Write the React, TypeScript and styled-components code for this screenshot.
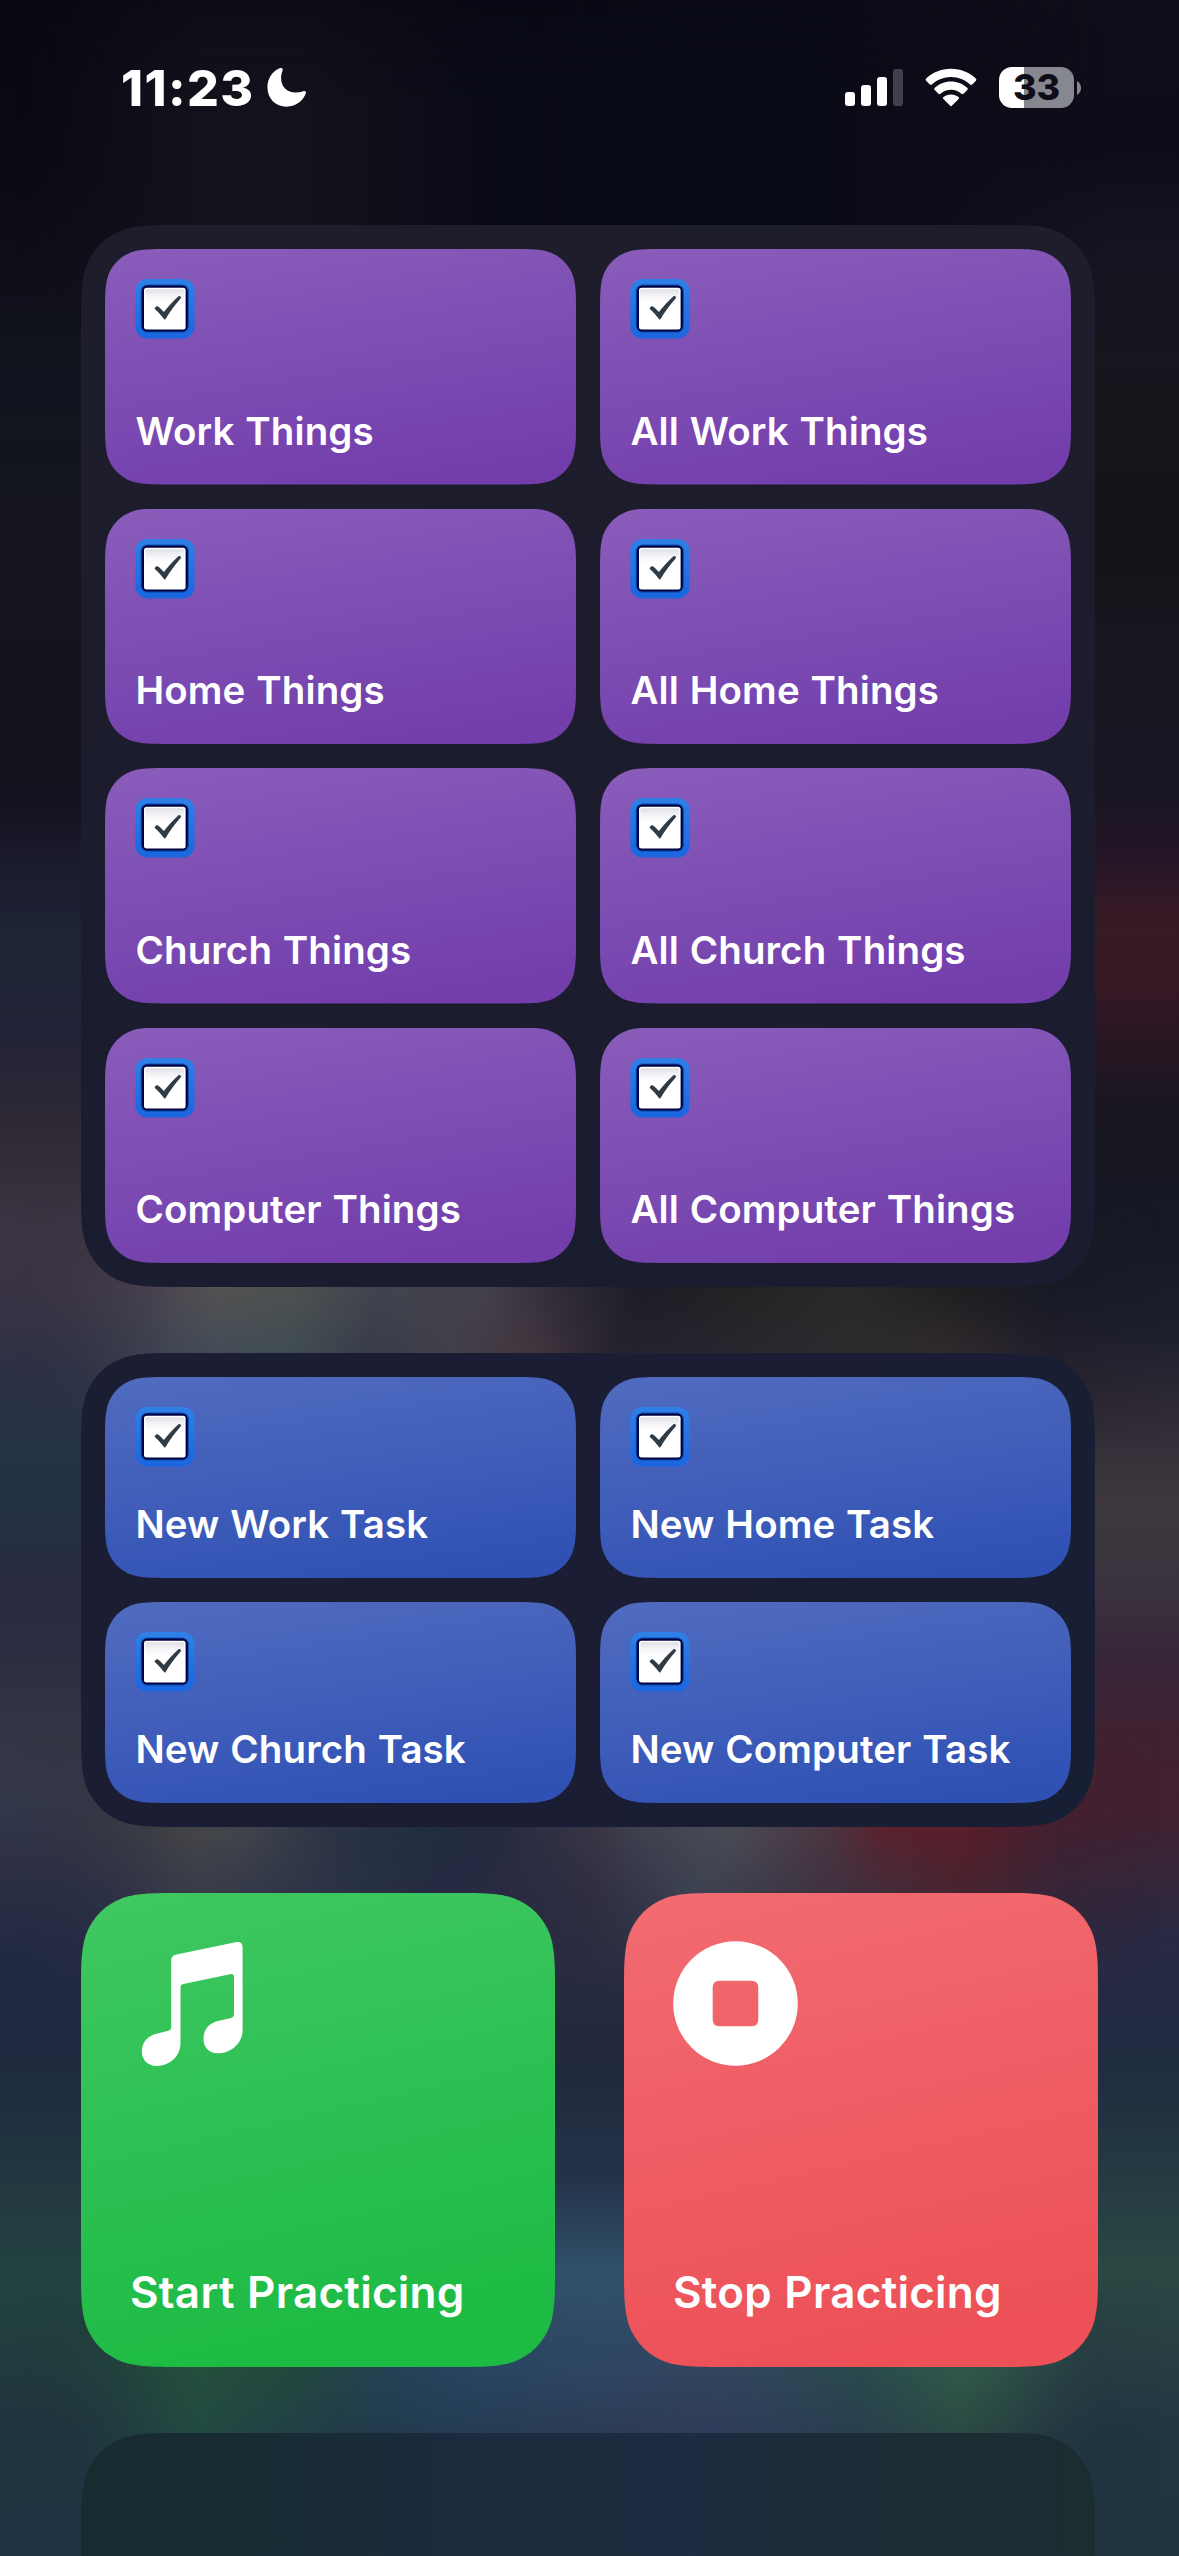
import React from "react";
import styled, { createGlobalStyle } from "styled-components";

const GlobalStyle = createGlobalStyle`
  html, body { margin: 0; padding: 0; background: #080812; }
  body { overflow: hidden; }
  * { box-sizing: border-box; }
`;

/* Continuous-curvature rounded rectangle, as a CSS path() value. */
const smoothRect = (w: number, h: number, r: number) => {
  const a = 1.52866 * r;
  const b = 1.08849 * r;
  const c = 0.86841 * r;
  const d = 0.63149 * r;
  const e = 0.37282 * r;
  const f = 0.16906 * r;
  const g = 0.07491 * r;
  return `path("M${a} 0L${w - a} 0C${w - b} 0 ${w - c} 0 ${w - d} ${g}C${w - e} ${f} ${w - f} ${e} ${w - g} ${d}C${w} ${c} ${w} ${b} ${w} ${a}L${w} ${h - a}C${w} ${h - b} ${w} ${h - c} ${w - g} ${h - d}C${w - f} ${h - e} ${w - e} ${h - f} ${w - d} ${h - g}C${w - c} ${h} ${w - b} ${h} ${w - a} ${h}L${a} ${h}C${b} ${h} ${c} ${h} ${d} ${h - g}C${e} ${h - f} ${f} ${h - e} ${g} ${h - d}C0 ${h - c} 0 ${h - b} 0 ${h - a}L0 ${a}C0 ${b} 0 ${c} ${g} ${d}C${f} ${e} ${e} ${f} ${d} ${g}C${c} 0 ${b} 0 ${a} 0Z")`;
};

const Screen = styled.div`
  position: relative;
  width: 1179px;
  height: 2556px;
  overflow: hidden;
  font-family: Inter, "Liberation Sans", sans-serif;
  color: #fff;
`;

const Wallpaper = styled.div`
  position: absolute;
  inset: 0;
  background: linear-gradient(
    180deg,
    #080812 0, #0a0914 160px, #0e0e19 260px, #11141e 390px, #15151d 560px, #13121b 740px,
    #14121f 800px, #1c1d31 880px, #1f2537 950px, #232338 1040px, #2e2834 1120px, #3b3442 1230px,
    #383344 1300px, #2d3045 1370px, #253444 1450px, #233243 1500px, #282b42 1580px, #2c2f42 1660px,
    #323644 1740px, #33374a 1800px, #2d3045 1870px, #222a42 1950px, #1f293f 2050px, #1f3040 2120px,
    #223a40 2200px, #224240 2280px, #213c3e 2350px, #20343f 2430px, #203444 2556px
  );

  &::after {
    content: "";
    position: absolute;
    inset: 0;
    background: linear-gradient(
      180deg,
      #0e0d19 0, #0e0c18 150px, #141320 240px, #17161e 360px, #131418 500px, #141317 560px,
      #161720 640px, #171522 780px, #231527 850px, #351a26 910px, #371925 980px, #2b1723 1030px,
      #1a1620 1100px, #161722 1180px, #171b28 1260px, #1d1f2d 1330px, #2b2733 1390px, #3d373d 1500px,
      #3a333e 1590px, #372538 1660px, #3f2232 1730px, #43202f 1800px, #362638 1870px, #292944 1940px,
      #222b42 2030px, #20303f 2100px, #243a42 2170px, #2b4743 2270px, #283f42 2350px, #213642 2430px,
      #203341 2556px
    );
    mask-image: linear-gradient(90deg, transparent 45%, #000 80%);
  }
`;

/* A horizontal slice of the blurred wallpaper that blends from one row of hues into another. */
const Slice = styled.div<{ $top: number; $height: number; $from: string; $to: string; $fade?: "top" | "bottom" }>`
  position: absolute;
  left: 0;
  width: 1179px;
  top: ${(p) => p.$top}px;
  height: ${(p) => p.$height}px;
  background: linear-gradient(90deg, ${(p) => p.$from});
  mask-image: linear-gradient(90deg, transparent 20px, #000 170px, #000 1010px, transparent 1160px),
    ${(p) =>
      p.$fade === "top"
        ? "linear-gradient(180deg, transparent, #000)"
        : p.$fade === "bottom"
          ? "linear-gradient(0deg, transparent, #000)"
          : "linear-gradient(#000, #000)"};
  mask-composite: intersect;

  &::after {
    content: "";
    position: absolute;
    inset: 0;
    background: linear-gradient(90deg, ${(p) => p.$to});
    mask-image: linear-gradient(180deg, transparent, #000);
  }
`;

const TopGlow = styled.div`
  position: absolute;
  inset: 0 0 auto 0;
  height: 300px;
  background: linear-gradient(90deg, transparent 20px, #12121c 200px, #12121c 300px, #0a0b17 480px, #080a16 780px, #0c0c18 900px, transparent 1100px);
  mask-image: linear-gradient(180deg, rgba(0, 0, 0, 0.5), #000 100px, #000);
`;

const CenterColumn = styled.div`
  position: absolute;
  left: 380px;
  width: 420px;
  top: 1880px;
  height: 500px;
  background: linear-gradient(180deg, #2c2d44 0, #272b3f 100px, #20293b 190px, #24334a 300px, #2f5169 390px, #31506a 420px, #2d4964 500px);
  mask-image: linear-gradient(90deg, transparent, #000 150px, #000 270px, transparent);
`;

const Content = styled.div`
  position: relative;
  display: flex;
  flex-direction: column;
  height: 100%;
`;

const StatusBar = styled.header`
  display: flex;
  flex: none;
  justify-content: space-between;
  height: 225px;
  padding: 67px 98px 0 121px;
`;

const StatusGroup = styled.div<{ $gap: number }>`
  display: flex;
  align-items: flex-start;
  height: 42px;
  gap: ${(p) => p.$gap}px;
`;

const Clock = styled.time`
  width: 133px;
  font-size: 50px;
  font-weight: 800;
  line-height: 42px;
  letter-spacing: 1.4px;
  white-space: nowrap;
`;

const Glyph = styled.svg`
  display: block;
  flex: none;
`;

const Battery = styled.div`
  display: flex;
  align-items: center;
  gap: 3px;
`;

const BatteryBody = styled.div`
  display: flex;
  align-items: center;
  justify-content: center;
  width: 75px;
  height: 41px;
  border-radius: 13px;
  background: linear-gradient(90deg, #fff 33.3%, #87878f 33.3%);
  color: #0e0d19;
  font-size: 36px;
  font-weight: 800;
  letter-spacing: -0.2px;
  line-height: 41px;
`;

const Stack = styled.main`
  display: flex;
  flex-direction: column;
  gap: 66px;
  padding: 0 81px;
`;

const Panel = styled.section<{ $height: number; $fill: string }>`
  display: grid;
  grid-template-columns: 471px 471px;
  grid-auto-rows: 1fr;
  flex: none;
  gap: 24px;
  width: 1014px;
  height: ${(p) => p.$height}px;
  padding: 24px;
  background: ${(p) => p.$fill};
  clip-path: ${(p) => smoothRect(1014, p.$height, 66)};
`;

const Tile = styled.button<{ $height: number; $fill: string }>`
  display: flex;
  flex-direction: column;
  align-items: flex-start;
  justify-content: space-between;
  height: ${(p) => p.$height}px;
  padding: 30px 30px 31px 30px;
  border: 0;
  background: ${(p) => p.$fill};
  clip-path: ${(p) => smoothRect(471, p.$height, 42)};
  color: #fff;
  font-family: inherit;
`;

const TileLabel = styled.span`
  padding-left: 0.5px;
  font-size: 38.5px;
  font-weight: 600;
  line-height: 46px;
  letter-spacing: 0.1px;
  word-spacing: 1px;
  white-space: nowrap;
`;

const BigRow = styled.section`
  display: flex;
  gap: 69px;
`;

const BigTile = styled.button<{ $fill: string }>`
  display: flex;
  flex: none;
  flex-direction: column;
  align-items: flex-start;
  justify-content: space-between;
  width: 474px;
  height: 474px;
  padding: 48px 48px 48px 49px;
  border: 0;
  background: ${(p) => p.$fill};
  clip-path: ${smoothRect(474, 474, 66)};
  color: #fff;
  font-family: inherit;
`;

const BigLabel = styled.span`
  font-size: 44px;
  font-weight: 600;
  line-height: 54px;
  letter-spacing: 0.25px;
  word-spacing: 1px;
  white-space: nowrap;
`;

const PURPLE = "linear-gradient(171deg, #895cba 3%, #7c4cb2 50%, #733eac 90%)";
const BLUE = "linear-gradient(172deg, #4f6bbf 3%, #405db9 50%, #2f51b4 92%)";
const GREEN = "linear-gradient(167deg, #3fc760 3%, #2bc052 50%, #1dbb43 88%)";
const RED = "linear-gradient(167deg, #f16b71 3%, #ee5c62 50%, #ed5057 90%)";

const Moon = () => (
  <Glyph width="40" height="40" viewBox="0 0 40 40">
    <path
      d="M13.2 1.1C14.8.4 16.3 1.6 15.6 3.4C14.5 6 14.1 8.2 14.1 11C14.1 19.9 19.9 25.4 28.7 25.4C31.5 25.4 34 25 36.3 24.2C38.3 23.5 39.5 24.8 38.8 26.6C35.7 34.6 28.2 39.7 19.6 39.7C8.5 39.7.4 31.3.4 20.2C.4 11.700 5.500 4 13.200 1.100Z"
      fill="#fff"
    />
  </Glyph>
);

const Signal = () => (
  <Glyph width="58" height="41" viewBox="0 0 58 41">
    <rect x="0" y="25" width="10" height="14" rx="3" fill="#fff" />
    <rect x="16" y="18" width="10" height="21" rx="3" fill="#fff" />
    <rect x="32" y="10" width="10" height="29" rx="3" fill="#fff" />
    <rect x="48" y="2" width="10" height="37" rx="3" fill="#403f4c" />
  </Glyph>
);

const Wifi = () => (
  <Glyph width="52" height="41" viewBox="0 0 52 41" fill="#fff">
    <path d="M26 1.800C35.800 1.800 44.700 5.600 50.800 11.500C51.500 12.200 51.500 13.100 50.900 13.700L47.200 17.400C46.600 18 45.700 18 45 17.400C40 12.800 33.300 10 26 10C18.700 10 12 12.800 7 17.400C6.300 18 5.400 18 4.800 17.400L1.100 13.700C.5 13.100.5 12.200 1.200 11.500C7.300 5.600 16.200 1.800 26 1.800Z" />
    <path d="M26 14.500C32.300 14.500 38 16.900 42.200 20.800C42.900 21.500 42.900 22.300 42.300 22.900L38.500 26.700C37.900 27.300 37.100 27.300 36.400 26.700C33.600 24.200 30 22.700 26 22.700C22 22.700 18.400 24.200 15.600 26.700C14.900 27.300 14.100 27.300 13.500 26.700L9.700 22.900C9.100 22.300 9.100 21.500 9.800 20.800C14 16.900 19.700 14.500 26 14.500Z" />
    <path d="M26 27.400C28.900 27.400 31.500 28.400 33.500 30.100C34.200 30.700 34.200 31.500 33.600 32.100L27.100 38.600C26.400 39.300 25.600 39.300 24.900 38.600L18.400 32.100C17.800 31.500 17.800 30.700 18.500 30.100C20.500 28.400 23.100 27.400 26 27.400Z" />
  </Glyph>
);

const CheckIcon = () => (
  <Glyph width="60" height="60" viewBox="0 0 60 60">
    <defs>
      <linearGradient id="check-frame" x1="0" y1="0" x2="0" y2="1">
        <stop offset="0" stopColor="#2f80e6" />
        <stop offset="1" stopColor="#1a66df" />
      </linearGradient>
      <linearGradient id="check-paper" x1="0" y1="0" x2="0" y2="1">
        <stop offset="0" stopColor="#dedee6" />
        <stop offset=".15" stopColor="#f2f2f6" />
        <stop offset=".35" stopColor="#fff" />
      </linearGradient>
    </defs>
    <rect x=".3" y="0" width="59.400" height="59.600" rx="12" fill="url(#check-frame)" />
    <rect x="5.600" y="5.400" width="48.400" height="48.400" rx="7" fill="#0a4fb4" />
    <rect x="6.800" y="6.600" width="46" height="46" rx="5.500" fill="#000342" />
    <rect x="9" y="8.800" width="41.600" height="41.800" rx="2.500" fill="#fff" />
    <rect x="10.200" y="10.200" width="39" height="38.400" rx="1.500" fill="url(#check-paper)" />
    <path
      transform="translate(.6 0)"
      d="M19.200 30.100C18.700 29 20.500 26.700 22 27.300C24.500 29 26.400 30.900 28.300 33.100C32.200 27.800 37 22.400 42.900 17.200C44.200 16.400 46.100 18 45.200 19.300C39.400 25.800 34.600 32.600 29.800 40.200C29.500 40.700 29 40.600 28.600 40.200C25.800 36.500 22.500 33.100 19.200 30.100Z"
      fill="#2f3b45"
    />
  </Glyph>
);

const MusicIcon = () => (
  <Glyph width="125" height="125" viewBox="0 0 125 125">
    <path
      d="M41.200 19.500C41.200 16 43 14.200 46.500 13.500L105.500 1.200C110 .3 112.600 1.900 112.600 6.300V89C112.600 102.500 101 112.300 87.600 112.300C79.200 112.300 73.500 106.500 73.500 98C73.500 89 78.500 82.500 88 80.100L100.200 77.200C103 76.500 104 75.300 104 73V36.500C104 33.800 102.800 32.700 100.200 33.200L53.300 42.900C51.200 43.400 50.500 44.300 50.500 46.500V102C50.500 115.500 39.500 124.900 26.500 124.900C17.700 124.900 11.900 119 11.900 110.500C11.900 101.500 17.200 95 26.500 92.700L37.300 90.100C40.200 89.400 41.200 88.400 41.200 86Z"
      fill="#fff"
    />
  </Glyph>
);

const StopIcon = () => (
  <Glyph width="125" height="125" viewBox="0 0 125 125">
    <path
      fillRule="evenodd"
      fill="#fff"
      d="M62.500.2A62.300 62.300 0 1 1 62.500 124.800A62.300 62.300 0 1 1 62.500.2ZM46.700 39.700Q39.700 39.700 39.700 46.700V78.300Q39.700 85.300 46.700 85.300H78.300Q85.300 85.300 85.300 78.300V46.700Q85.300 39.700 78.300 39.700Z"
    />
  </Glyph>
);

const THINGS = [
  "Work Things", "All Work Things",
  "Home Things", "All Home Things",
  "Church Things", "All Church Things",
  "Computer Things", "All Computer Things",
];
const TASKS = ["New Work Task", "New Home Task", "New Church Task", "New Computer Task"];

const ROW_1287 =
  "#3b3442 0, #4a4350 150px, #545252 215px, #4e5150 290px, #41444f 380px, #45424b 480px, #302c38 560px, #1d1d27 640px, #222422 740px, #29292b 850px, #1f1e20 960px, #181a24 1050px";
const ROW_1353 =
  "#2e3046 0, #3a3e4c 100px, #434c57 215px, #404d52 290px, #383d49 370px, #42404a 450px, #43353f 530px, #24222e 620px, #25252f 700px, #2b2c2e 830px, #302b2d 940px, #221f2a 1050px";
const ROW_1827 =
  "#31343f 0, #36383f 80px, #454548 200px, #42464c 240px, #2c3445 330px, #212f40 420px, #262b42 500px, #3a3646 600px, #3f4250 640px, #4a4b55 730px, #4b3540 830px, #5a222f 880px, #5a1e2b 960px, #45202f 1060px";
const ROW_1893 =
  "#2d3045 60px, #3a3c4a 200px, #2b3346 330px, #252a42 450px, #302e42 590px, #3d4351 700px, #3f3342 820px, #48242f 960px, #382536 1060px";
const ROW_2367 =
  "#223f3c 60px, #254f3d 200px, #23473d 300px, #244258 400px, #294660 470px, #2f4763 600px, #33455f 700px, #30485a 770px, #2a4a4d 860px, #30594a 960px, #2c4a46 1040px, #253b42 1100px";
const ROW_2433 =
  "#20373f 60px, #224a41 200px, #213b49 350px, #233c54 450px, #2c3b55 600px, #303c5a 720px, #283f4f 850px, #2b4a42 960px, #22333f 1100px";

export default function App() {
  return (
    <Screen>
      <GlobalStyle />
      <Wallpaper />
      <TopGlow />
      <CenterColumn />
      <Slice $top={1200} $height={87} $from={ROW_1287} $to={ROW_1287} $fade="top" />
      <Slice $top={1287} $height={66} $from={ROW_1287} $to={ROW_1353} />
      <Slice $top={1353} $height={90} $from={ROW_1353} $to={ROW_1353} $fade="bottom" />
      <Slice $top={1730} $height={97} $from={ROW_1827} $to={ROW_1827} $fade="top" />
      <Slice $top={1827} $height={66} $from={ROW_1827} $to={ROW_1893} />
      <Slice $top={1893} $height={110} $from={ROW_1893} $to={ROW_1893} $fade="bottom" />
      <Slice $top={2280} $height={87} $from={ROW_2367} $to={ROW_2367} $fade="top" />
      <Slice $top={2367} $height={66} $from={ROW_2367} $to={ROW_2433} />
      <Slice $top={2433} $height={90} $from={ROW_2433} $to={ROW_2433} $fade="bottom" />

      <Content>
        <StatusBar>
          <StatusGroup $gap={13}>
            <Clock>11:23</Clock>
            <Moon />
          </StatusGroup>
          <StatusGroup $gap={22}>
            <Signal />
            <Wifi />
            <Battery>
              <BatteryBody>33</BatteryBody>
              <Glyph width="4" height="14" viewBox="0 0 4 14">
                <path d="M0 0C2.500 1.500 4 4 4 7S2.500 12.500 0 14Z" fill="#87878f" />
              </Glyph>
            </Battery>
          </StatusGroup>
        </StatusBar>

        <Stack>
          <Panel $height={1062} $fill="linear-gradient(180deg, #1e1d2b 0, #1c1c2d 45%, #1a1c30 100%)">
            {THINGS.map((label) => (
              <Tile key={label} $height={235.5} $fill={PURPLE}>
                <CheckIcon />
                <TileLabel>{label}</TileLabel>
              </Tile>
            ))}
          </Panel>
          <Panel $height={474} $fill="linear-gradient(120deg, #1b1d33 0, #1a1d33 60%, #171f34 100%)">
            {TASKS.map((label) => (
              <Tile key={label} $height={201} $fill={BLUE}>
                <CheckIcon />
                <TileLabel>{label}</TileLabel>
              </Tile>
            ))}
          </Panel>
          <BigRow>
            <BigTile $fill={GREEN}>
              <MusicIcon />
              <BigLabel>Start Practicing</BigLabel>
            </BigTile>
            <BigTile $fill={RED}>
              <StopIcon />
              <BigLabel>Stop Practicing</BigLabel>
            </BigTile>
          </BigRow>
          <Panel $height={474} $fill="linear-gradient(90deg, #162d30 0, #182c35 20%, #1b2a3c 35%, #1f2b40 60%, #1c2c35 80%, #1b2d31 100%)" />
        </Stack>
      </Content>
    </Screen>
  );
}
